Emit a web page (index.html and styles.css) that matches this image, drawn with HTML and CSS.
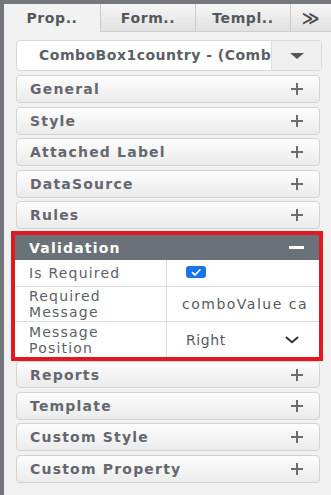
FILE: index.html
```html
<!DOCTYPE html>
<html lang="en">

<head>
    <meta charset="UTF-8">
    <meta name="viewport" content="width=device-width, initial-scale=1.0">
    <title>Properties Panel</title>
    <link rel="stylesheet" href="styles.css">
</head>

<body>
    <div class="app">
        <!-- Вкладки -->
        <div class="tabs">
            <div class="tab active">Prop..</div>
            <div class="tab">Form..</div>
            <div class="tab">Templ..</div>
            <div class="tab more">&#8811;</div>
        </div>

        <div class="panel">
            <!-- Выбор элемента -->
            <div class="combo">
                <div class="combo-text">ComboBox1country - (ComboBox)</div>
                <div class="combo-btn"><span class="caret"></span></div>
            </div>

            <div class="sections">
                <div class="section">General<span class="plus"></span></div>
                <div class="section">Style<span class="plus"></span></div>
                <div class="section">Attached Label<span class="plus"></span></div>
                <div class="section">DataSource<span class="plus"></span></div>
                <div class="section">Rules<span class="plus"></span></div>

                <!-- Открытый раздел -->
                <div class="validation">
                    <div class="val-head">Validation<span class="minus"></span></div>
                    <div class="row short">
                        <div class="label">Is Required</div>
                        <div class="value">
                            <span class="check">
                                <svg width="12" height="9" viewBox="0 0 12 9"><path d="M2.5 4.6 L5 7 L9.8 2" fill="none" stroke="#fff" stroke-width="1.8" stroke-linecap="round" stroke-linejoin="round"/></svg>
                            </span>
                        </div>
                    </div>
                    <div class="row">
                        <div class="label">Required<br>Message</div>
                        <div class="value clip">comboValue ca</div>
                    </div>
                    <div class="row last">
                        <div class="label">Message<br>Position</div>
                        <div class="value select">Right
                            <svg width="14" height="8" viewBox="0 0 14 8"><path d="M1.5 1.5 L7 6.2 L12.5 1.5" fill="none" stroke="#333" stroke-width="2" stroke-linecap="round" stroke-linejoin="round"/></svg>
                        </div>
                    </div>
                </div>

                <div class="section after">Reports<span class="plus"></span></div>
                <div class="section">Template<span class="plus"></span></div>
                <div class="section">Custom Style<span class="plus"></span></div>
                <div class="section">Custom Property<span class="plus"></span></div>
            </div>
        </div>
    </div>
</body>

</html>
```

FILE: styles.css
```css
* {
    margin: 0;
    padding: 0;
    box-sizing: border-box;
}

html, body {
    height: 100%;
    overflow: hidden;
    font-family: "DejaVu Sans", Verdana, sans-serif;
    background: #f1f1f1;
}

.app {
    height: 495px;
    border-top: 4px solid #74777b;
    border-left: 4px solid #727579;
    background: #f1f1f1;
}

/* Вкладки */
.tabs {
    display: flex;
    height: 28px;
}

.tab {
    width: 95px;
    display: flex;
    justify-content: center;
    align-items: center;
    font-size: 14px;
    font-weight: bold;
    letter-spacing: 0.6px;
    color: #55585d;
    background: linear-gradient(#f6f6f6, #e1e1e1);
    border-left: 1px solid #c9c9c9;
    border-bottom: 1px solid #cfcfcf;
}

.tab.active {
    width: 96px;
    background: #f2f2f2;
    border-left: none;
    border-bottom: none;
}

.tab.more {
    flex: 1;
    font-size: 17px;
    font-weight: bold;
    color: #4a4a4a;
}

.panel {
    padding: 8px 11px 0 12px;
}

/* Комбобокс */
.combo {
    display: flex;
    height: 31px;
    margin-right: -2px;
    background: #fff;
    border: 1px solid #d8d8d8;
    border-radius: 4px;
    overflow: hidden;
}

.combo-text {
    flex: 1;
    padding-left: 22px;
    line-height: 29px;
    font-size: 14px;
    font-weight: bold;
    letter-spacing: 0.5px;
    color: #5b5f66;
    white-space: nowrap;
    overflow: hidden;
}

.combo-btn {
    width: 50px;
    background: #efefef;
    border-left: 1px solid #dedede;
    display: flex;
    justify-content: center;
    align-items: center;
}

.caret {
    border-left: 7px solid transparent;
    border-right: 7px solid transparent;
    border-top: 6px solid #555;
}

/* Разделы */
.sections {
    display: flex;
    flex-direction: column;
    gap: 3.5px;
    margin-top: 4px;
}

.section {
    height: 28px;
    display: flex;
    justify-content: space-between;
    align-items: center;
    padding: 0 16px 0 13px;
    font-size: 14px;
    font-weight: bold;
    letter-spacing: 1.2px;
    color: #64686e;
    background: linear-gradient(#fdfdfd, #ebebeb);
    border: 1px solid #d3d3d3;
    border-radius: 4px;
}

.section.after {
    height: 27px;
}

.plus {
    position: relative;
    width: 12px;
    height: 12px;
}

.plus::before,
.plus::after {
    content: "";
    position: absolute;
    background: #6c6c6c;
}

.plus::before {
    left: 0;
    top: 5px;
    width: 12px;
    height: 2px;
}

.plus::after {
    left: 5px;
    top: 0;
    width: 2px;
    height: 12px;
}

/* Validation */
.validation {
    margin: -1.5px -3px -3.5px -5px;
    border: 4px solid #e3171f;
    background: #fff;
}

.val-head {
    height: 25px;
    display: flex;
    justify-content: space-between;
    align-items: center;
    padding: 0 15px 0 14px;
    background: #6b7178;
    color: #fff;
    font-size: 14px;
    font-weight: bold;
    letter-spacing: 1.2px;
}

.minus {
    width: 15px;
    height: 3px;
    background: #fff;
}

.row {
    display: flex;
    height: 35px;
    border-bottom: 1px solid #dcdcdc;
}

.row.short {
    height: 27px;
}

.row.last {
    border-bottom: none;
}

.label {
    width: 152px;
    padding-left: 14px;
    border-right: 1px solid #dcdcdc;
    display: flex;
    align-items: center;
    font-size: 14px;
    line-height: 16px;
    letter-spacing: 1.2px;
    color: #5d6168;
}

.value {
    flex: 1;
    display: flex;
    align-items: center;
    padding-left: 19px;
    font-size: 14px;
    letter-spacing: 0.6px;
    color: #555a61;
    white-space: nowrap;
    overflow: hidden;
}

.value.clip {
    padding-left: 15px;
    letter-spacing: 1.5px;
}

.value.select {
    justify-content: space-between;
    padding-right: 20px;
}

.check {
    width: 20px;
    height: 12px;
    border-radius: 3px;
    background: #1a73e8;
    display: flex;
    justify-content: center;
    align-items: center;
    margin-top: -2px;
}
```
